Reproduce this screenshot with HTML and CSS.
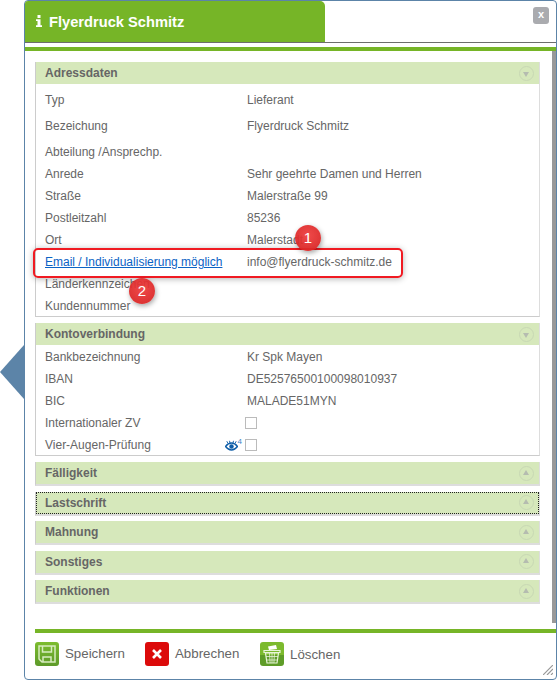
FILE: index.html
```html
<!DOCTYPE html>
<html lang="de">
<head>
  <meta charset="UTF-8">
  <title>Flyerdruck Schmitz</title>
  <link rel="stylesheet" href="styles.css">
</head>
<body>
  <div class="pointer"></div>
  <div class="dialog">
    <div class="title-row">
      <div class="title-tab">
        <svg class="info-icon" width="8" height="12" viewBox="0 0 8 12"><path d="M2.500 0h3v3h-3zM1 4.200h4.500v6H7V12H1v-1.800h1.500V6H1z" fill="#fff"/></svg>
        <span>Flyerdruck Schmitz</span>
      </div>
      <button class="close-btn">x</button>
    </div>
    <div class="title-line"></div>
    <div class="green-bar"></div>
    <div class="content">
      <section class="panel">
        <div class="panel-head"><span>Adressdaten</span><i class="toggle down"></i></div>
        <div class="rows">
          <div class="row spaced"><span>Typ</span><span>Lieferant</span></div>
          <div class="row spaced"><span>Bezeichung</span><span>Flyerdruck Schmitz</span></div>
          <div class="row"><span>Abteilung /Ansprechp.</span><span></span></div>
          <div class="row"><span>Anrede</span><span>Sehr geehrte Damen und Herren</span></div>
          <div class="row"><span>Straße</span><span>Malerstraße 99</span></div>
          <div class="row"><span>Postleitzahl</span><span>85236</span></div>
          <div class="row"><span>Ort</span><span>Malerstadt</span></div>
          <div class="row"><a href="#">Email / Individualisierung möglich</a><span>info@flyerdruck-schmitz.de</span></div>
          <div class="row"><span>Länderkennzeichen</span><span></span></div>
          <div class="row"><span>Kundennummer</span><span></span></div>
        </div>
      </section>
      <section class="panel konto">
        <div class="panel-head"><span>Kontoverbindung</span><i class="toggle down"></i></div>
        <div class="rows">
          <div class="row"><span>Bankbezeichnung</span><span>Kr Spk Mayen</span></div>
          <div class="row"><span>IBAN</span><span>DE52576500100098010937</span></div>
          <div class="row"><span>BIC</span><span>MALADE51MYN</span></div>
          <div class="row"><span>Internationaler ZV</span><span class="checkbox"></span></div>
          <div class="row"><span class="label-eye">Vier-Augen-Prüfung
            <span class="eye">
              <svg width="13" height="11" viewBox="0 0 13 11"><path d="M.5 6.500C2.500 3.800 4.500 3 6.500 3s4 .8 6 3.500C10.500 9.200 8.500 10 6.500 10s-4-.8-6-3.500z" fill="none" stroke="#0f5ea8" stroke-width="1.400"/><circle cx="6.500" cy="6.500" r="2.200" fill="#0f5ea8"/><path d="M3 3.500 1.800 1.200M5 3 4.500.8M8 3l.5-2.200M10 3.500l1.200-2.300" stroke="#0f5ea8" stroke-width=".9"/></svg><sup>4</sup>
            </span></span><span class="checkbox"></span></div>
        </div>
      </section>
      <section class="panel closed"><div class="panel-head"><span>Fälligkeit</span><i class="toggle"></i></div></section>
      <section class="panel closed focused"><div class="panel-head"><span>Lastschrift</span><i class="toggle"></i></div></section>
      <section class="panel closed"><div class="panel-head"><span>Mahnung</span><i class="toggle"></i></div></section>
      <section class="panel closed"><div class="panel-head"><span>Sonstiges</span><i class="toggle"></i></div></section>
      <section class="panel closed"><div class="panel-head"><span>Funktionen</span><i class="toggle"></i></div></section>
    </div>
    <div class="footer">
      <div class="footer-line"></div>
      <div class="actions">
        <a class="action save" href="#">
          <span class="action-icon icon-green">
            <svg width="24" height="24" viewBox="0 0 24 24"><path d="M4 4h16v16H7l-3-3z" fill="none" stroke="#d8ecc0" stroke-width="1.500"/><path d="M7.500 4v6h9V4M8 20v-5h8v5" fill="none" stroke="#d8ecc0" stroke-width="1.500"/></svg>
          </span>
          <span>Speichern</span>
        </a>
        <a class="action cancel" href="#">
          <span class="action-icon icon-red">
            <svg width="24" height="24" viewBox="0 0 24 24"><path d="M8 8l8 8M16 8l-8 8" stroke="#fff" stroke-width="2.600"/></svg>
          </span>
          <span>Abbrechen</span>
        </a>
        <a class="action remove" href="#">
          <span class="action-icon icon-trash">
            <svg width="24" height="24" viewBox="0 0 24 24"><path d="M8 4.500l8-1.500 1 4-8 1z" fill="#fff"/><path d="M4 8.500h16v2H4zM5.500 11h13l-1.500 10H7z" fill="none" stroke="#e8f4d8" stroke-width="1.200"/><path d="M9.500 11l.6 10M12 11v10M14.500 11l-.6 10M6 14.500h12M6.500 18h11" stroke="#e8f4d8" stroke-width=".8"/></svg>
          </span>
          <span>Löschen</span>
        </a>
      </div>
    </div>
    <svg class="grip" width="10" height="10" viewBox="0 0 10 10"><path d="M0 10 10 0M4 10l6-6M8 10l2-2" stroke="#999" stroke-width="1.200"/></svg>
  </div>

  <div class="highlight"></div>
  <div class="badge badge-one">1</div>
  <div class="badge badge-two">2</div>
</body>
</html>
```
FILE: styles.css
```css
html, body { margin: 0; padding: 0; height: 680px; overflow: hidden; background-color: #fff; }
body { font-family: "Liberation Sans", Arial, sans-serif; font-size: 12px; color: #666; position: relative; }

.pointer { position: absolute; left: 0; top: 345px; width: 0; height: 0; border-top: 27px solid transparent; border-bottom: 27px solid transparent; border-right: 24px solid #5c84a8; }

.dialog { position: relative; box-sizing: border-box; margin-left: 24px; width: 533px; height: 680px; border: 1px solid #5c84a8; border-radius: 4px; background-color: #fff; }

.title-row { display: flex; justify-content: space-between; height: 41px; }
.title-tab { width: 300px; display: flex; align-items: center; gap: 6px; padding-left: 10px; box-sizing: border-box; background-color: #76b527; border-radius: 3px 5px 0 0; color: #fff; font-size: 14.67px; font-weight: bold; }
.info-icon { flex: none; margin-top: -1px; }
.close-btn { width: 16px; height: 17px; margin: 6px 7px 0 0; padding: 0 0 3px; border: none; border-radius: 3px; background-color: #aaabaf; color: #fff; font-family: inherit; font-size: 11px; font-weight: bold; }
.title-line { height: 1px; background-color: #6d6d6d; }
.green-bar { height: 4px; margin-top: 4px; background-color: #76b527; }

.content { position: relative; height: 578px; box-sizing: border-box; padding: 11px 16px 0 10px; }
.content::after { content: ""; position: absolute; right: 0; top: 0; bottom: 6px; width: 4px; background-color: #999; }

.panel { width: 505px; box-sizing: border-box; border-left: 1px solid #ccc; border-right: 1px solid #ddd; border-bottom: 1px solid #ccc; margin-bottom: 6px; }
.panel-head { height: 22px; display: flex; align-items: center; justify-content: space-between; padding: 0 5px 0 9px; background-color: #d6e8bb; font-weight: bold; color: #666; }
.rows { padding-top: 5px; margin-bottom: -1px; }
.panel.konto .rows { padding-top: 1px; }
.row { height: 22px; display: flex; align-items: center; padding-left: 9px; }
.row.spaced { margin-bottom: 4px; }
.row > :first-child { width: 202px; flex: none; }
.row a { color: #0b63c5; }
.label-eye { display: flex; justify-content: space-between; align-items: center; width: 197px !important; margin-right: 5px; }
.eye { display: flex; color: #3a86c8; }
.eye sup { font-size: 8px; line-height: 8px; margin: -2px 0 0 0; }
.checkbox { width: 10px; height: 10px; border: 1px solid #bbb; margin-left: -2px; }

.toggle { position: relative; width: 13px; height: 13px; border: 1px solid #c8d8b4; border-radius: 50%; }
.toggle::after { content: ""; position: absolute; left: 3px; top: 3px; width: 0; height: 0; border-left: 3.500px solid transparent; border-right: 3.500px solid transparent; border-bottom: 5px solid #b5bcb0; }
.toggle.down::after { top: 5px; border-bottom: none; border-top: 5px solid #b5bcb0; }

.panel.closed { border-bottom-width: 2px; border-bottom-color: #ddd; margin-bottom: 5.500px; }
.panel.focused .panel-head { outline: 1px dotted #222; outline-offset: -1px; }

.footer-line { height: 4px; margin-left: 10px; background-color: #76b527; }
.actions { display: flex; padding: 8px 0 0 10px; }
.action { display: flex; align-items: center; gap: 6px; font-size: 13.3px; color: #666; text-decoration: none; }
.action.save { width: 110px; }
.action.cancel { width: 115px; }
.action.remove { margin-top: 1px; }
.action-icon { width: 24px; height: 24px; border-radius: 3px; display: block; flex: none; }
.action-icon svg { display: block; }
.icon-green { background: linear-gradient(#7dbc2f, #5d9a2a); }
.icon-trash { background: linear-gradient(#7cba2e 55%, #5e9c28 55%); }
.icon-red { background-color: #dc0a0a; }

.grip { position: absolute; right: 3px; bottom: 4px; }

.highlight { position: absolute; left: 33px; top: 248px; width: 366px; height: 26px; border: 2px solid #f01a22; border-radius: 5px; box-shadow: 0 1px 6px rgba(0, 0, 0, .3); }
.badge { position: absolute; width: 26px; height: 26px; border-radius: 50%; background: radial-gradient(circle at 50% 40%, rgba(238, 58, 58, .92), rgba(212, 32, 32, .95)); color: #fff; font-size: 15px; line-height: 26px; text-align: center; box-shadow: 1px 2px 5px rgba(0, 0, 0, .35); }
.badge-one { left: 295px; top: 225px; }
.badge-two { left: 129px; top: 278px; }
```
